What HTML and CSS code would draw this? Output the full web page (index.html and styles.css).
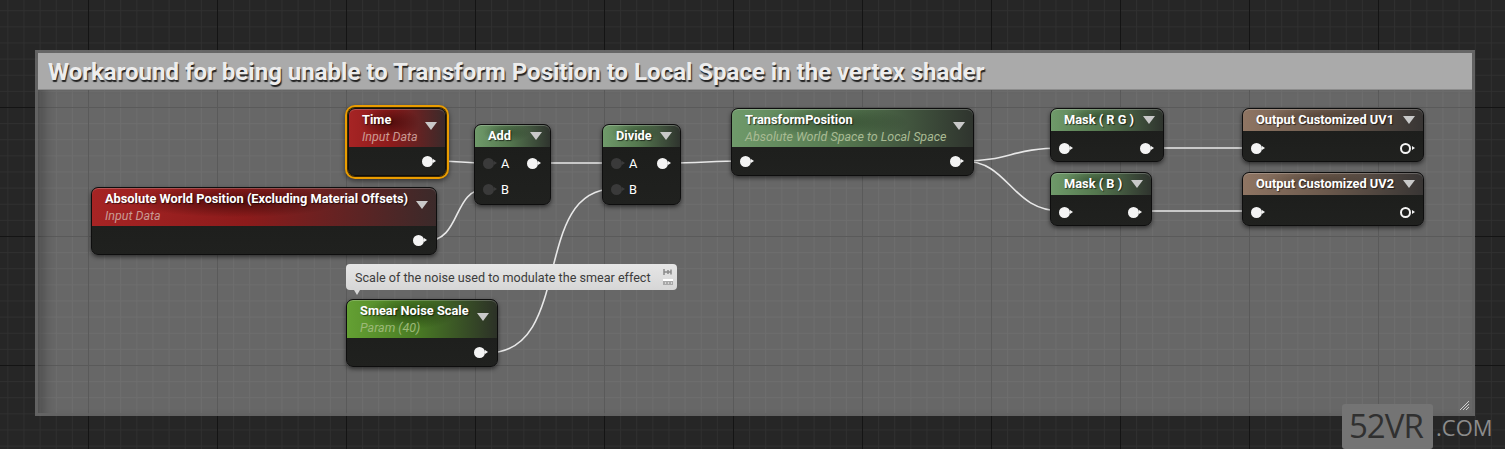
FILE: index.html
```html
<!DOCTYPE html>
<html lang="en">
<head>
    <meta charset="UTF-8">
    <title>Material Graph</title>
    <link rel="stylesheet" href="styles.css">
</head>
<body>
<div class="canvas">

    <div class="comment-box">
        <div class="comment-title">Workaround for being unable to Transform Position to Local Space in the vertex shader</div>
        <div class="comment-body"></div>
        <svg class="grip" width="12" height="12" viewBox="0 0 12 12">
            <path d="M2 11 L11 2 M5 11 L11 5 M8 11 L11 8" stroke="#d0d0d0" stroke-width="1"/>
        </svg>
    </div>

    <svg class="wires" width="1505" height="449">
        <path d="M434 161 C460 161, 462 163, 486 163"/>
        <path d="M426 241 C462 241, 452 189, 486 189"/>
        <path d="M539 163 L614 163"/>
        <path d="M487 353 C575 353, 530 189, 614 189"/>
        <path d="M668 163 C700 163, 712 161, 743 161"/>
        <path d="M963 161 C1010 161, 1012 148, 1062 148"/>
        <path d="M963 161 C1010 161, 1010 211, 1062 211"/>
        <path d="M1152 148 L1254 148"/>
        <path d="M1140 211 L1254 211"/>
    </svg>

    <!-- input data nodes -->
    <div class="node n-time selected">
        <div class="head head-red tall">
            <div class="title">Time</div>
            <div class="sub sub-red">Input Data</div>
            <span class="arrow"></span>
        </div>
        <div class="body tight">
            <div class="row"><span></span><span class="pin"></span></div>
        </div>
    </div>

    <div class="node n-absworld">
        <div class="head head-red tall">
            <div class="title">Absolute World Position (Excluding Material Offsets)</div>
            <div class="sub sub-red">Input Data</div>
            <span class="arrow"></span>
        </div>
        <div class="body tight">
            <div class="row"><span></span><span class="pin"></span></div>
        </div>
    </div>

    <!-- math -->
    <div class="node n-add">
        <div class="head head-green">
            <div class="title">Add</div>
            <span class="arrow"></span>
        </div>
        <div class="body">
            <div class="row"><span class="in"><span class="pin dim"></span>A</span><span class="pin"></span></div>
            <div class="row"><span class="in"><span class="pin dim"></span>B</span></div>
        </div>
    </div>

    <div class="node n-divide">
        <div class="head head-green">
            <div class="title">Divide</div>
            <span class="arrow"></span>
        </div>
        <div class="body">
            <div class="row"><span class="in"><span class="pin dim"></span>A</span><span class="pin"></span></div>
            <div class="row"><span class="in"><span class="pin dim"></span>B</span></div>
        </div>
    </div>

    <div class="node n-transform">
        <div class="head head-green tall">
            <div class="title">TransformPosition</div>
            <div class="sub sub-green">Absolute World Space to Local Space</div>
            <span class="arrow"></span>
        </div>
        <div class="body tight">
            <div class="row"><span class="pin"></span><span class="pin"></span></div>
        </div>
    </div>

    <div class="node n-maskrg">
        <div class="head head-green">
            <div class="title">Mask ( R G )</div>
            <span class="arrow"></span>
        </div>
        <div class="body flat">
            <div class="row"><span class="pin"></span><span class="pin"></span></div>
        </div>
    </div>

    <div class="node n-maskb">
        <div class="head head-green">
            <div class="title">Mask ( B )</div>
            <span class="arrow"></span>
        </div>
        <div class="body flat">
            <div class="row"><span class="pin"></span><span class="pin"></span></div>
        </div>
    </div>

    <!-- outputs -->
    <div class="node n-uv1">
        <div class="head head-brown">
            <div class="title">Output Customized UV1</div>
            <span class="arrow"></span>
        </div>
        <div class="body flat">
            <div class="row"><span class="pin"></span><span class="pin ring"></span></div>
        </div>
    </div>

    <div class="node n-uv2">
        <div class="head head-brown">
            <div class="title">Output Customized UV2</div>
            <span class="arrow"></span>
        </div>
        <div class="body flat">
            <div class="row"><span class="pin"></span><span class="pin ring"></span></div>
        </div>
    </div>

    <!-- param -->
    <div class="bubble">
        <span>Scale of the noise used to modulate the smear effect</span>
        <svg class="bubble-icons" width="12" height="20" viewBox="0 0 12 20">
            <path d="M2 2 L2 8 M2 5 L9 5 M9 2.5 L9 7.5 M6 3 L6 7" stroke="#8a8a8a" stroke-width="1.5" fill="none"/>
            <rect x="1" y="12" width="10" height="6" fill="#a8a8a8"/>
            <rect x="1" y="12" width="10" height="2" fill="#ffffff"/>
            <path d="M3 16 h1 M6 16 h1 M9 16 h1" stroke="#ffffff" stroke-width="1"/>
        </svg>
    </div>

    <div class="node n-smear">
        <div class="head head-lime tall">
            <div class="title">Smear Noise Scale</div>
            <div class="sub sub-lime">Param (40)</div>
            <span class="arrow"></span>
        </div>
        <div class="body tight">
            <div class="row"><span></span><span class="pin"></span></div>
        </div>
    </div>

    <div class="watermark"><span class="wm-box">52VR</span><span class="wm-com">.COM</span></div>

</div>
</body>
</html>
```

FILE: styles.css
```css
body {
    margin: 0;
    background-color: #262626;
    font-family: Roboto, 'Liberation Sans', sans-serif;
}
.canvas {
    position: relative;
    width: 1505px;
    height: 449px;
    overflow: hidden;
    background-color: #262626;
    background-image:
        linear-gradient(to right, #141414 1px, transparent 1px),
        linear-gradient(to bottom, #141414 1px, transparent 1px),
        linear-gradient(to right, #303030 1px, transparent 1px),
        linear-gradient(to bottom, #303030 1px, transparent 1px);
    background-size: 129px 129px, 129px 129px, 16.125px 16.125px, 16.125px 16.125px;
    background-position: 88px 107px;
}

/* comment frame */
.comment-box {
    position: absolute;
    left: 35px;
    top: 50px;
    width: 1434px;
    height: 360px;
    border: 3px solid rgba(120, 120, 120, 0.75);
    border-top-color: rgba(110, 110, 110, 0.9);
    display: flex;
    flex-direction: column;
}
.comment-title {
    height: 36px;
    line-height: 38px;
    padding-left: 10px;
    background-color: #aaaaaa;
    border-bottom: 1px solid #8c8c8c;
    color: #ededed;
    font-size: 24px;
    font-weight: bold;
    white-space: nowrap;
    text-shadow: 1px 2px 1px rgba(0, 0, 0, 0.8);
}
.comment-body {
    flex: 1;
    background-color: rgba(255, 255, 255, 0.3);
    box-shadow: inset 14px 0 12px -8px rgba(0, 0, 0, 0.25);
}
.grip {
    position: absolute;
    right: 2px;
    bottom: 2px;
}

.wires {
    position: absolute;
    left: 0;
    top: 0;
}
.wires path {
    fill: none;
    stroke: #e8e8e8;
    stroke-width: 1.6;
}

/* nodes */
.node {
    position: absolute;
    background: linear-gradient(#1b1c1a, #20211f);
    border: 1px solid #0e0e0e;
    border-radius: 7px;
    box-shadow: 0 2px 4px rgba(0, 0, 0, 0.55);
    color: #fff;
    font-size: 12.8px;
}
.node.selected {
    box-shadow: 0 0 0 1px #3a2600, 0 0 0 3px #e99c00, 0 2px 5px 3px rgba(0, 0, 0, 0.5);
}
.head {
    position: relative;
    height: 22px;
    padding: 0 24px 0 13px;
    border-radius: 6px 6px 0 0;
    box-shadow: inset 0 1px 0 rgba(255, 255, 255, 0.22);
    display: flex;
    flex-direction: column;
    justify-content: center;
}
.head.tall {
    height: 38px;
}
.title {
    font-weight: bold;
    line-height: 16px;
    white-space: nowrap;
    text-shadow: 1px 1px 1px rgba(0, 0, 0, 0.6);
}
.sub {
    font-style: italic;
    font-size: 12.5px;
    line-height: 17px;
    white-space: nowrap;
}
.sub-red { color: #c99a93; }
.sub-green { color: #a9bb94; }
.sub-lime { color: #9cb878; }
.arrow {
    position: absolute;
    right: 8px;
    top: 50%;
    margin-top: -4px;
    border-top: 8px solid #c9c9c9;
    border-left: 6px solid transparent;
    border-right: 6px solid transparent;
}
.head.tall .arrow {
    margin-top: -6px;
}
.head-red {
    background:
        radial-gradient(ellipse 45% 60% at 42% 35%, rgba(30, 0, 0, 0.55), transparent 70%),
        linear-gradient(90deg, #a62424 0%, #8c1b1b 45%, #3b2a2a 100%);
}
.head-green {
    background:
        radial-gradient(ellipse 45% 60% at 42% 35%, rgba(10, 25, 10, 0.35), transparent 70%),
        linear-gradient(90deg, #6f9a6a 0%, #55784f 45%, #2f342e 100%);
}
.head-lime {
    background:
        radial-gradient(ellipse 45% 60% at 42% 35%, rgba(10, 25, 0, 0.45), transparent 70%),
        linear-gradient(90deg, #64a033 0%, #4a7d24 45%, #2c3127 100%);
}
.head-brown {
    background:
        radial-gradient(ellipse 45% 60% at 42% 35%, rgba(30, 20, 10, 0.3), transparent 70%),
        linear-gradient(90deg, #8f7563 0%, #6c5a4d 45%, #383534 100%);
}

.body {
    padding: 3px 0 2px;
}
.body.tight {
    padding: 1px 0;
}
.body.flat {
    padding: 4px 0 0;
}
.row {
    height: 26px;
    display: flex;
    align-items: center;
    justify-content: space-between;
    padding: 0 12px 0 8px;
}
.in {
    display: flex;
    align-items: center;
    gap: 7px;
}
.pin {
    position: relative;
    width: 11px;
    height: 11px;
    border-radius: 50%;
    background-color: #f4f4f4;
}
.pin::after {
    content: '';
    position: absolute;
    right: -3px;
    top: 3px;
    border-left: 3px solid #f4f4f4;
    border-top: 2.5px solid transparent;
    border-bottom: 2.5px solid transparent;
}
.pin.dim {
    background-color: #3a3a3a;
}
.pin.dim::after {
    border-left-color: #3a3a3a;
}
.pin.ring {
    width: 7px;
    height: 7px;
    background: none;
    border: 2px solid #f4f4f4;
}
.pin.ring::after {
    right: -6px;
    top: 1px;
}

.n-time { left: 348px; top: 108px; width: 96px; }
.n-absworld { left: 91px; top: 187px; width: 344px; }
.n-add { left: 474px; top: 124px; width: 75px; }
.n-divide { left: 602px; top: 124px; width: 77px; }
.n-transform { left: 731px; top: 108px; width: 241px; }
.n-maskrg { left: 1050px; top: 108px; width: 112px; }
.n-maskb { left: 1050px; top: 172px; width: 100px; }
.n-uv1 { left: 1242px; top: 108px; width: 180px; }
.n-uv2 { left: 1242px; top: 172px; width: 180px; }
.n-smear { left: 346px; top: 299px; width: 150px; }

/* comment bubble over the param node */
.bubble {
    position: absolute;
    left: 346px;
    top: 264px;
    width: 331px;
    height: 26px;
    box-sizing: border-box;
    padding: 0 3px 0 9px;
    background: linear-gradient(#e6e6e6, #d6d6d6);
    border-radius: 4px;
    color: #3c3c3c;
    font-size: 12.6px;
    display: flex;
    align-items: center;
    justify-content: space-between;
}
.bubble::after {
    content: '';
    position: absolute;
    left: 8px;
    bottom: -5px;
    border-top: 5px solid #d6d6d6;
    border-left: 3px solid transparent;
    border-right: 3px solid transparent;
}

/* watermark */
.watermark {
    position: absolute;
    left: 1342px;
    top: 404px;
    display: flex;
    align-items: center;
}
.wm-box {
    width: 91px;
    height: 45px;
    box-sizing: border-box;
    padding-left: 7px;
    background-color: #747474;
    border-radius: 3px;
    color: #303030;
    font-family: 'Open Sans', sans-serif;
    font-size: 33px;
    line-height: 44px;
    letter-spacing: -1px;
}
.wm-com {
    margin-left: 3px;
    color: #8c8c8c;
    font-family: 'Open Sans', sans-serif;
    font-size: 22px;
}
```
